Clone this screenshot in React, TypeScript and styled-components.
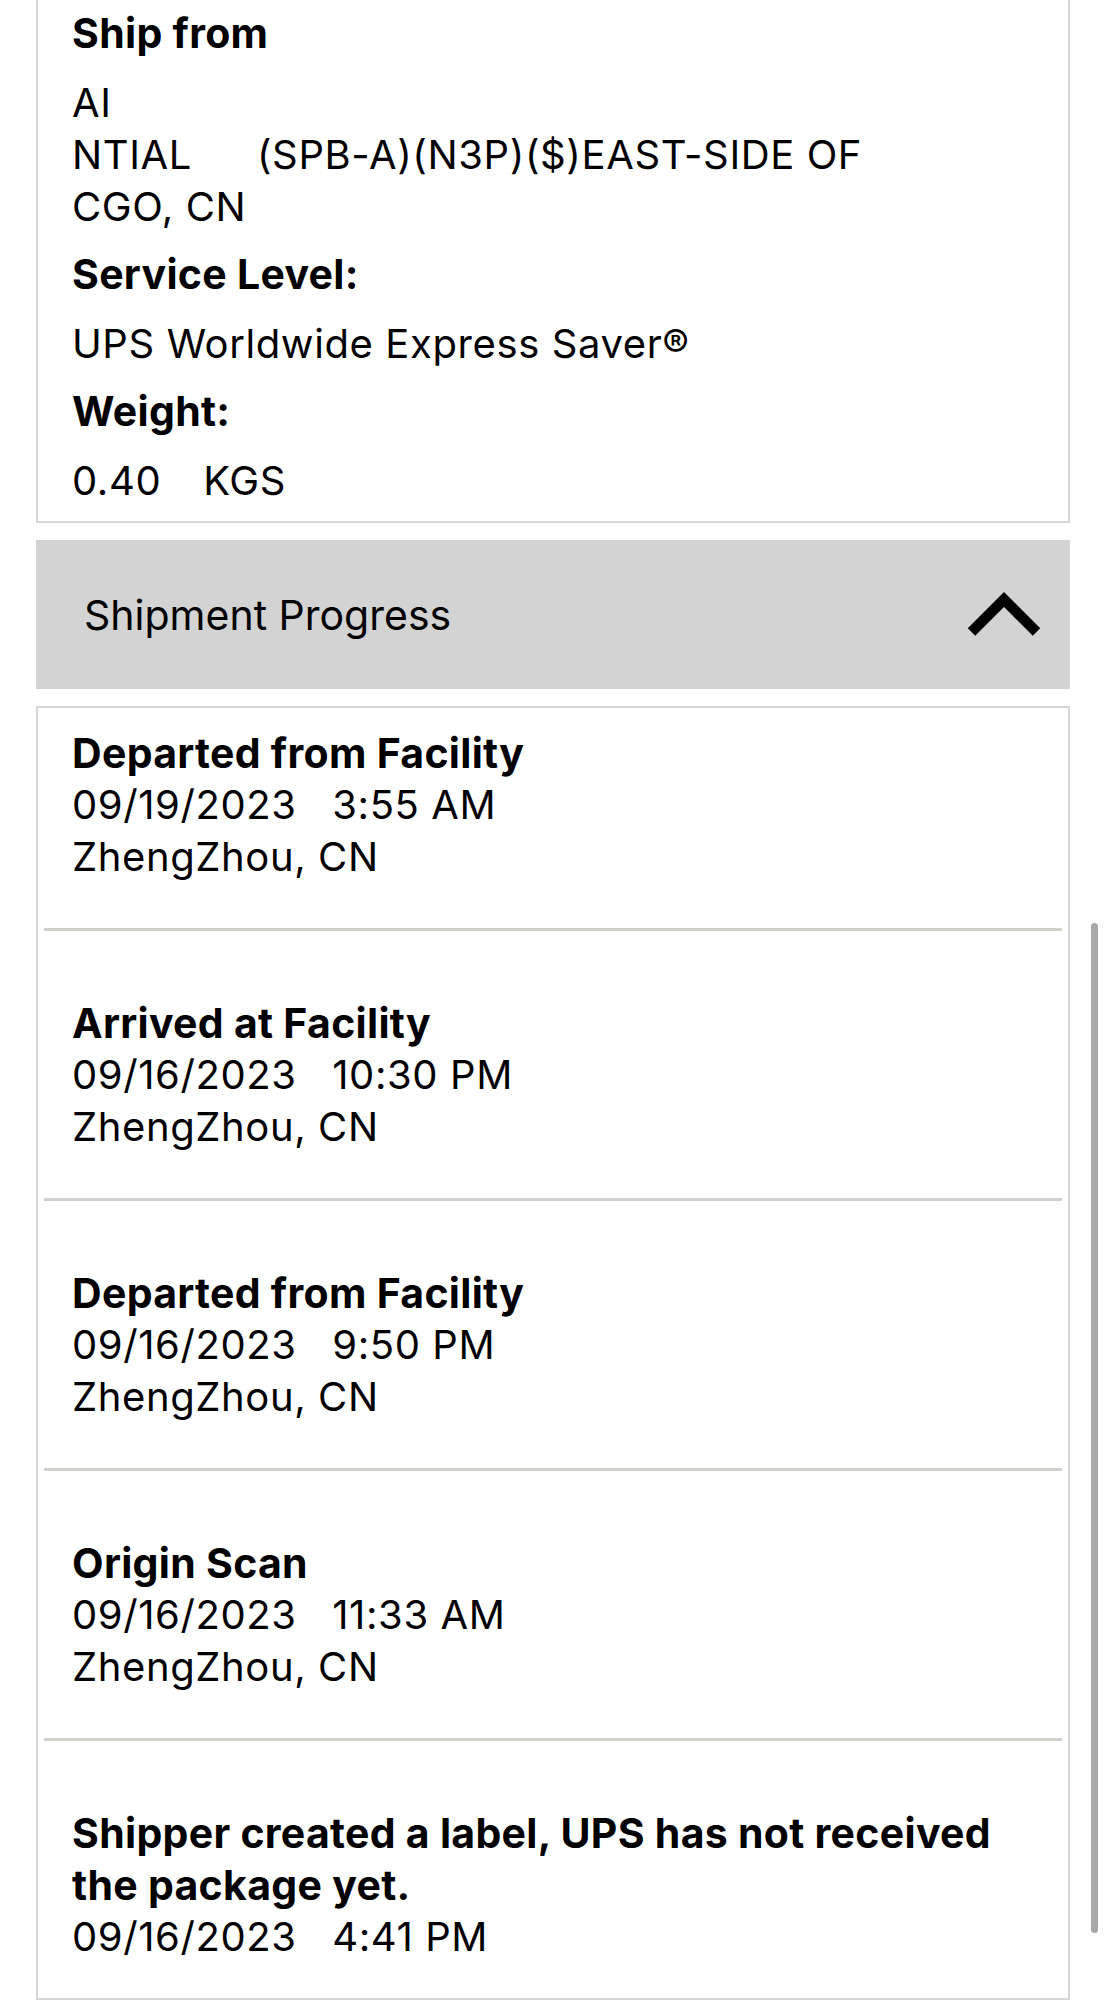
import React from "react";
import styled, { createGlobalStyle } from "styled-components";

const GlobalStyle = createGlobalStyle`
  html, body {
    margin: 0;
    padding: 0;
    background: #ffffff;
    overflow: hidden;
  }
  body {
    font-family: Inter, "Liberation Sans", Arial, sans-serif;
    color: #000000;
  }
  * { box-sizing: border-box; }
`;

const Page = styled.div`
  position: relative;
  display: flex;
  flex-direction: column;
  height: 2000px;
  padding: 0 36px;
  overflow: hidden;
`;

const Card = styled.section<{ $scrolled?: boolean }>`
  border: 2px solid #d6d6d6;
  background: #ffffff;
  margin-top: ${(p) => (p.$scrolled ? "-40px" : "17px")};
`;

const DetailsBody = styled.div`
  padding: 45px 20px 14px 34px;
  display: flex;
  flex-direction: column;
`;

const Label = styled.h3`
  margin: 0 0 18px;
  font-size: 41px;
  line-height: 52px;
  font-weight: 700;
  letter-spacing: 0.3px;
`;

const Value = styled.div<{ $last?: boolean }>`
  margin: 0 0 ${(p) => (p.$last ? "0" : "15px")};
  display: flex;
  flex-direction: column;
  font-size: 40px;
  line-height: 52px;
  font-weight: 400;
  letter-spacing: 0.6px;
`;

const ValueLine = styled.div`
  display: flex;
  white-space: nowrap;
`;

const Segment = styled.span<{ $gap?: number }>`
  margin-left: ${(p) => p.$gap ?? 0}px;
`;

const AccordionHeader = styled.button`
  margin-top: 17px;
  height: 149px;
  width: 100%;
  border: none;
  background: #d3d3d3;
  display: flex;
  align-items: center;
  justify-content: space-between;
  padding: 0 28px 0 48px;
  font-family: inherit;
  font-size: 41px;
  line-height: 52px;
  font-weight: 400;
  color: #000000;
  text-align: left;
`;

const ChevronIcon = () => (
  <svg width="76" height="46" viewBox="0 0 76 46" aria-hidden="true">
    <polyline
      points="5.5,40 38,7.5 70.5,40"
      fill="none"
      stroke="#000"
      strokeWidth="10.5"
      strokeLinecap="butt"
      strokeLinejoin="miter"
    />
  </svg>
);

const Timeline = styled.div`
  padding: 0 6px;
  display: flex;
  flex-direction: column;
`;

const Event = styled.div<{ $first?: boolean; $last?: boolean }>`
  padding: ${(p) => (p.$first ? "19px" : "66px")} 10px
    ${(p) => (p.$last ? "35px" : "45px")} 28px;
  border-bottom: ${(p) => (p.$last ? "none" : "3px solid #d3d0cb")};
  display: flex;
  flex-direction: column;
`;

const EventTitle = styled.div`
  font-size: 41px;
  line-height: 52px;
  font-weight: 700;
  letter-spacing: 0.3px;
`;

const EventLine = styled.div`
  font-size: 40px;
  line-height: 52px;
  font-weight: 400;
  letter-spacing: 0.6px;
  white-space: pre;
`;

const ScrollIndicator = styled.div`
  position: absolute;
  top: 923px;
  right: 8px;
  width: 7px;
  height: 1010px;
  border-radius: 4px;
  background: #a8a8a8;
`;

type ProgressEvent = {
  title: string;
  date: string;
  time: string;
  place?: string;
};

const events: ProgressEvent[] = [
  { title: "Departed from Facility", date: "09/19/2023", time: "3:55 AM", place: "ZhengZhou, CN" },
  { title: "Arrived at Facility", date: "09/16/2023", time: "10:30 PM", place: "ZhengZhou, CN" },
  { title: "Departed from Facility", date: "09/16/2023", time: "9:50 PM", place: "ZhengZhou, CN" },
  { title: "Origin Scan", date: "09/16/2023", time: "11:33 AM", place: "ZhengZhou, CN" },
  { title: "Shipper created a label, UPS has not received the package yet.", date: "09/16/2023", time: "4:41 PM" },
];

export default function App() {
  return (
    <>
      <GlobalStyle />
      <Page>
        <Card $scrolled>
          <DetailsBody>
            <Label>Ship from</Label>
            <Value>
              <ValueLine>AI</ValueLine>
              <ValueLine>
                <Segment>NTIAL</Segment>
                <Segment $gap={65}>(SPB-A)(N3P)($)EAST-SIDE OF</Segment>
              </ValueLine>
              <ValueLine>CGO, CN</ValueLine>
            </Value>
            <Label>Service Level:</Label>
            <Value>
              <ValueLine>UPS Worldwide Express Saver®</ValueLine>
            </Value>
            <Label>Weight:</Label>
            <Value $last>
              <ValueLine>
                <Segment>0.40</Segment>
                <Segment $gap={42}>KGS</Segment>
              </ValueLine>
            </Value>
          </DetailsBody>
        </Card>

        <AccordionHeader type="button" aria-expanded="true">
          <span>Shipment Progress</span>
          <ChevronIcon />
        </AccordionHeader>

        <Card>
          <Timeline>
            {events.map((e, i) => (
              <Event key={i} $first={i === 0} $last={i === events.length - 1}>
                <EventTitle>{e.title}</EventTitle>
                <EventLine>{`${e.date}   ${e.time}`}</EventLine>
                {e.place && <EventLine>{e.place}</EventLine>}
              </Event>
            ))}
          </Timeline>
        </Card>

        <ScrollIndicator />
      </Page>
    </>
  );
}
